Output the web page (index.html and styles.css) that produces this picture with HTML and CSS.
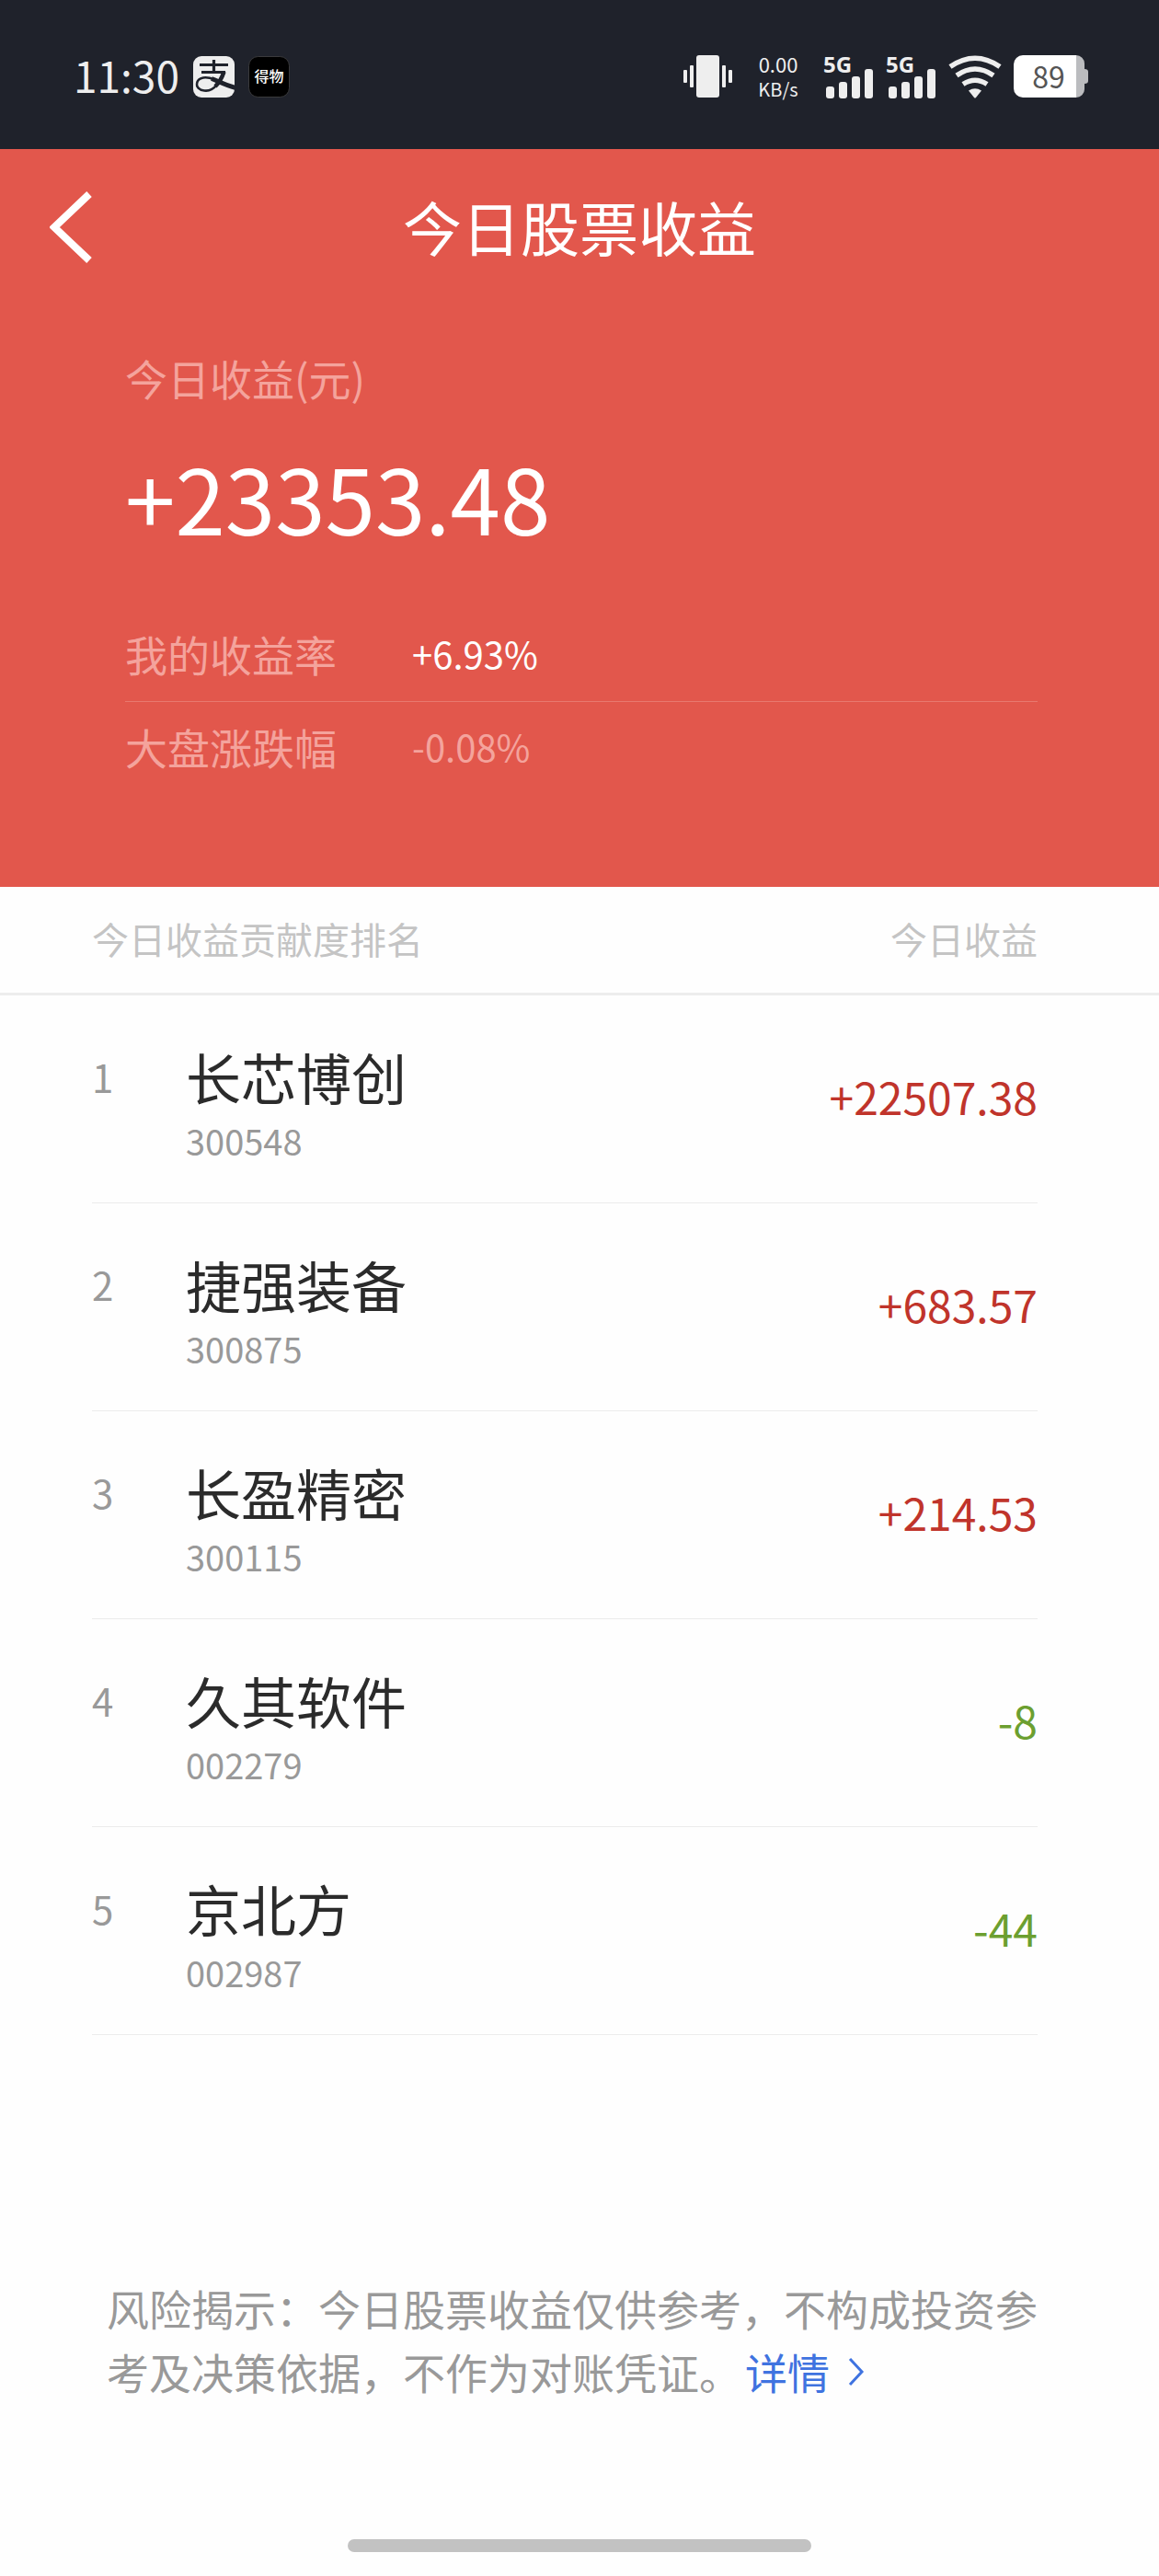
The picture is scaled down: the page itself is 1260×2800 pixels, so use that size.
FILE: index.html
```html
<!DOCTYPE html>
<html lang="zh-CN">
<head>
    <meta charset="UTF-8">
    <meta name="viewport" content="width=device-width, initial-scale=1.0">
    <title>今日股票收益</title>
    <link rel="stylesheet" href="styles.css">
</head>
<body>
    <div class="status-bar">
        <div class="status-left">
            <span class="time">11:30</span>
            <svg class="app-icon" viewBox="0 0 45 45">
                <rect width="45" height="45" rx="9" fill="#eee"/>
                <g fill="none" stroke="#1f222b">
                    <path d="M7 9.5H38M22.500 4V17M9 17.500H35" stroke-width="3.200"/>
                    <path d="M34 16.500C32 23 29 28 25 32C21 37 16 38 12 37.500C6 37 3.500 33 4 30C5 22 15 22 23 25.500" stroke-width="2.600"/>
                    <path d="M33.500 17C31.500 23 28 29 24 33" stroke-width="4.500"/>
                    <path d="M20 24.500C27 27 34 31 46 34.500" stroke-width="5"/>
                </g>
            </svg>
            <svg class="app-icon" viewBox="0 0 45 45">
                <rect x="0.5" y="0.5" width="44" height="44" rx="10" fill="#000" stroke="#3a3a3c"/>
                <text class="app-name" x="22.5" y="28" text-anchor="middle">得物</text>
            </svg>
        </div>
        <div class="status-right">
            <svg class="vibrate" viewBox="0 0 54 46" fill="#eee">
                <rect x="14" width="25" height="46" rx="3"/>
                <rect x="7" y="11" width="4" height="24" rx="1"/>
                <rect x="0" y="16" width="4" height="14" rx="1"/>
                <rect x="42" y="11" width="4" height="24" rx="1"/>
                <rect x="49" y="16" width="4" height="14" rx="1"/>
            </svg>
            <div class="speed">
                <span>0.00</span>
                <span class="speed-unit">KB/s</span>
            </div>
            <div class="signal">
                <span class="signal-type">5G</span>
                <svg viewBox="0 0 55 47" fill="#eee">
                    <rect x="3" y="34" width="9" height="13" rx="3"/>
                    <rect x="17" y="29" width="9" height="18" rx="3"/>
                    <rect x="31" y="23" width="9" height="24" rx="3"/>
                    <rect x="45" y="15" width="9" height="32" rx="3"/>
                </svg>
            </div>
            <div class="signal">
                <span class="signal-type">5G</span>
                <svg viewBox="0 0 55 47" fill="#eee">
                    <rect x="3" y="34" width="9" height="13" rx="3"/>
                    <rect x="17" y="29" width="9" height="18" rx="3"/>
                    <rect x="31" y="23" width="9" height="24" rx="3"/>
                    <rect x="45" y="15" width="9" height="32" rx="3"/>
                </svg>
            </div>
            <svg class="wifi" viewBox="0 0 58 47">
                <g fill="none" stroke="#eee" stroke-width="5.500">
                    <path d="M2 12.500Q29 -6 56 12.500"/>
                    <path d="M9 22Q29 8 49 22"/>
                    <path d="M16 31.500Q29 23 42 31.500"/>
                </g>
                <path d="M22 38.500Q29 34 36 38.500L30 46Q29 47 28 46Z" fill="#eee"/>
            </svg>
            <div class="battery">
                <svg viewBox="0 0 81 46">
                    <path d="M68 0A9 9 0 0 1 77 9V15Q81 15 81 18V28Q81 31 77 31V37A9 9 0 0 1 68 46Z" fill="#bbbcbf"/>
                    <path d="M10 0H68V46H10A10 10 0 0 1 0 36V10A10 10 0 0 1 10 0Z" fill="#fff"/>
                </svg>
                <span class="battery-level">89</span>
            </div>
        </div>
    </div>

    <header class="summary">
        <div class="nav">
            <button class="back" type="button" aria-label="返回">
                <svg viewBox="0 0 46 78"><path d="M43 3L5 39L43 75" fill="none" stroke="#fff" stroke-width="8"/></svg>
            </button>
            <h1>今日股票收益</h1>
        </div>
        <div class="summary-body">
            <div class="label">今日收益(元)</div>
            <div class="total">+23353.48</div>
            <div class="rate-row">
                <span class="rate-label">我的收益率</span>
                <span class="rate">+6.93%</span>
            </div>
            <div class="rate-row">
                <span class="rate-label">大盘涨跌幅</span>
                <span class="rate rate-market">-0.08%</span>
            </div>
        </div>
    </header>

    <main>
        <div class="list-head">
            <span>今日收益贡献度排名</span>
            <span>今日收益</span>
        </div>
        <ol class="stock-list">
            <li class="stock">
                <span class="rank">1</span>
                <div class="stock-info">
                    <span class="name">长芯博创</span>
                    <span class="code">300548</span>
                </div>
                <span class="profit up">+22507.38</span>
            </li>
            <li class="stock">
                <span class="rank">2</span>
                <div class="stock-info">
                    <span class="name">捷强装备</span>
                    <span class="code">300875</span>
                </div>
                <span class="profit up">+683.57</span>
            </li>
            <li class="stock">
                <span class="rank">3</span>
                <div class="stock-info">
                    <span class="name">长盈精密</span>
                    <span class="code">300115</span>
                </div>
                <span class="profit up">+214.53</span>
            </li>
            <li class="stock">
                <span class="rank">4</span>
                <div class="stock-info">
                    <span class="name">久其软件</span>
                    <span class="code">002279</span>
                </div>
                <span class="profit down">-8</span>
            </li>
            <li class="stock">
                <span class="rank">5</span>
                <div class="stock-info">
                    <span class="name">京北方</span>
                    <span class="code">002987</span>
                </div>
                <span class="profit down">-44</span>
            </li>
        </ol>
        <p class="notice">风险揭示：今日股票收益仅供参考，不构成投资参考及决策依据，不作为对账凭证。<a class="detail" href="#">详情<svg class="arrow" viewBox="0 0 18 32"><path d="M2 2L15 16L2 30" fill="none" stroke="#3f73e0" stroke-width="3"/></svg></a></p>
    </main>

    <div class="home-bar"></div>
</body>
</html>
```
FILE: styles.css
```css
* {
    margin: 0;
    padding: 0;
    box-sizing: border-box;
}

body {
    background-color: #fefefe;
    font-family: "Noto Sans CJK SC", sans-serif;
    min-height: 100vh;
    display: flex;
    flex-direction: column;
}

svg {
    display: block;
}

/* status bar */
.status-bar {
    background-color: #1f222b;
    color: #eee;
    height: 162px;
    padding: 4px 77px 0 80px;
    display: flex;
    justify-content: space-between;
    align-items: center;
}

.status-left {
    display: flex;
    align-items: center;
    gap: 15px;
}

.time {
    width: 115px;
    font-size: 46px;
    line-height: 46px;
    padding-bottom: 4px;
}

.app-icon {
    width: 45px;
    height: 45px;
}

.app-name {
    font-size: 16px;
    font-weight: 500;
    fill: #fff;
}

.status-right {
    display: flex;
    align-items: center;
    gap: 13px;
}

.vibrate {
    width: 54px;
    height: 46px;
}

.speed {
    display: flex;
    flex-direction: column;
    align-items: center;
    width: 72px;
    font-size: 22px;
    line-height: 28px;
}

.speed-unit {
    font-size: 20px;
}

.signal {
    position: relative;
    width: 55px;
    height: 47px;
}

.signal-type {
    position: absolute;
    top: -2px;
    left: 0;
    font-family: "Noto Sans", sans-serif;
    font-size: 24px;
    line-height: 24px;
    font-weight: 700;
}

.wifi {
    width: 58px;
    height: 47px;
}

.battery {
    position: relative;
    width: 81px;
    height: 46px;
}

.battery-level {
    position: absolute;
    top: 0;
    left: 0;
    width: 76px;
    text-align: center;
    font-size: 32px;
    line-height: 44px;
    color: #555;
}

/* red summary area */
.summary {
    background-color: #e2574c;
    color: #fff;
    height: 802px;
}

.nav {
    display: grid;
    grid-template-columns: 1fr auto 1fr;
    align-items: center;
    height: 170px;
    padding: 0 54px;
}

.nav h1 {
    font-size: 64px;
    line-height: 80px;
    font-weight: 400;
    padding-bottom: 4px;
}

.back {
    width: 46px;
    height: 78px;
    background: none;
    border: none;
    cursor: pointer;
}

.summary-body {
    padding: 48px 132px 0 136px;
}

.label {
    font-size: 46px;
    line-height: 60px;
    color: #f4a39c;
}

.total {
    font-size: 98px;
    line-height: 130px;
    padding: 34px 0 58px;
}

.rate-row {
    display: flex;
    align-items: center;
    height: 100px;
    padding-bottom: 4px;
}

.rate-row + .rate-row {
    border-top: 1px solid #e9796f;
}

.rate-label {
    width: 312px;
    font-size: 46px;
    color: #f4a39c;
}

.rate {
    font-size: 40px;
}

.rate-market {
    color: #f4a39c;
}

/* ranking list */
.list-head {
    display: flex;
    justify-content: space-between;
    align-items: center;
    height: 118px;
    padding: 0 132px 4px 100px;
    border-bottom: 3px solid #ededed;
    font-size: 40px;
    color: #c4c4c4;
}

.stock-list {
    list-style: none;
    padding: 0 132px 0 100px;
}

.stock {
    display: flex;
    height: 226px;
    padding-top: 48px;
    border-bottom: 1px solid #ececec;
}

.rank {
    width: 102px;
    font-size: 42px;
    line-height: 80px;
    color: #999;
}

.stock-info {
    flex: 1;
    display: flex;
    flex-direction: column;
}

.name {
    font-size: 60px;
    line-height: 80px;
    color: #2b2b2b;
}

.code {
    font-size: 38px;
    line-height: 60px;
    color: #999;
}

.profit {
    font-size: 48px;
    line-height: 122px;
}

.up {
    color: #c0342b;
}

.down {
    color: #6c9f30;
}

.notice {
    padding: 262px 132px 0 116px;
    font-size: 46px;
    line-height: 69px;
    color: #999;
}

.detail {
    display: inline-flex;
    align-items: center;
    margin-left: 4px;
    color: #3f73e0;
    text-decoration: none;
}

.arrow {
    width: 18px;
    height: 32px;
    margin-left: 20px;
}

.home-bar {
    width: 40%;
    height: 14px;
    margin: auto auto 26px;
    border-radius: 7px;
    background-color: #c2c2c2;
}
```
